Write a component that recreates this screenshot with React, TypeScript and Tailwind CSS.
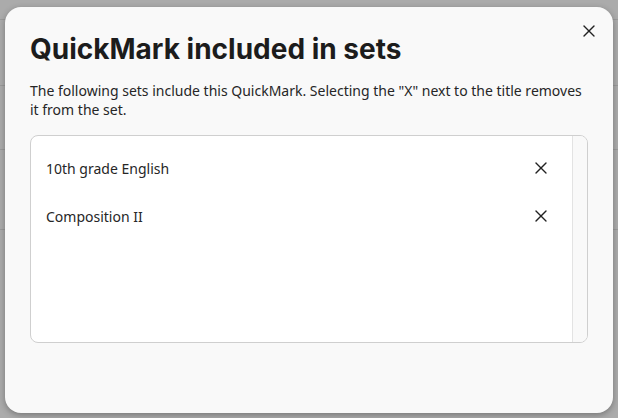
import { X } from "lucide-react";

const sets = ["10th grade English", "Composition II"];

export default function App() {
  return (
    <div className="relative h-[418px] w-[618px] overflow-hidden bg-[#ababab]">
      {/* dimmed page behind the dialog */}
      <div className="flex flex-col">
        <div className="h-[20px] border-b border-[#9a9a9a]" />
        <div className="h-[66px] border-b border-[#9a9a9a]" />
        <div className="h-[64px] border-b border-[#9a9a9a]" />
        <div className="h-[80px] border-b border-[#9a9a9a]" />
      </div>

      <div className="absolute left-[5px] top-[7px] flex h-[406px] w-[608px] flex-col rounded-[16px] bg-[#f9f9f9] px-[25px] pt-[24px] shadow-[0_2px_6px_rgba(0,0,0,0.3)]">
        <button className="absolute right-[14px] top-[14px] flex h-[20px] w-[20px] items-center justify-center text-[#222]">
          <X size={20} strokeWidth={1.6} />
        </button>

        <h2
          className="text-[28px] font-bold leading-[36px] text-[#1c1c1c]"
          style={{ fontFamily: "Inter, 'Noto Sans', sans-serif" }}
        >
          QuickMark included in sets
        </h2>

        <p
          className="mt-[14px] text-[14px] leading-[19px] text-[#262626]"
          style={{ fontFamily: "'Noto Sans', sans-serif" }}
        >
          The following sets include this QuickMark. Selecting the "X" next to the
          title removes it from the set.
        </p>

        <div className="mt-[16px] flex h-[208px] overflow-hidden rounded-[8px] border border-[#cfcfcf] bg-white">
          <ul className="flex-1 pt-[8px]" style={{ fontFamily: "'Noto Sans', sans-serif" }}>
            {sets.map((s) => (
              <li key={s} className="flex h-[48px] items-center justify-between pl-[15px] pr-[21px]">
                <span className="text-[14px] text-[#262626]">{s}</span>
                <X size={20} strokeWidth={1.6} className="text-[#222]" />
              </li>
            ))}
          </ul>
          <div className="w-[15px] border-l border-[#e3e3e3] bg-[#f9f9f9]" />
        </div>
      </div>
    </div>
  );
}
